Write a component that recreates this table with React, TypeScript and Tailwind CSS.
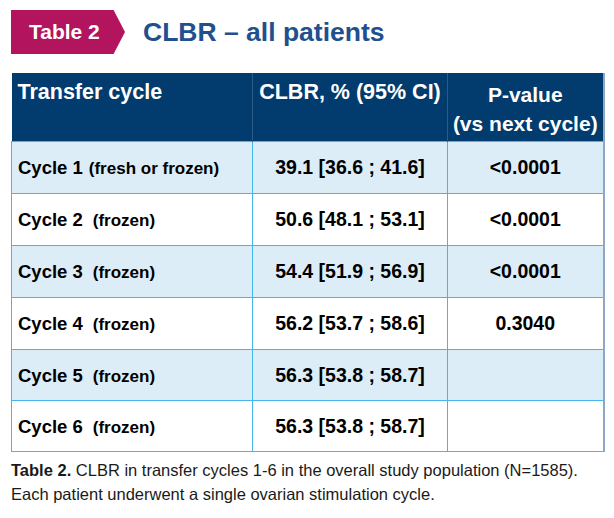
const rows = [
  { cycle: "Cycle 1", note: "(fresh or frozen)", gap: "ml-[6px]", clbr: "39.1 [36.6 ; 41.6]", p: "<0.0001" },
  { cycle: "Cycle 2", note: "(frozen)", gap: "ml-[10px]", clbr: "50.6 [48.1 ; 53.1]", p: "<0.0001" },
  { cycle: "Cycle 3", note: "(frozen)", gap: "ml-[10px]", clbr: "54.4 [51.9 ; 56.9]", p: "<0.0001" },
  { cycle: "Cycle 4", note: "(frozen)", gap: "ml-[10px]", clbr: "56.2 [53.7 ; 58.6]", p: "0.3040" },
  { cycle: "Cycle 5", note: "(frozen)", gap: "ml-[10px]", clbr: "56.3 [53.8 ; 58.7]", p: "" },
  { cycle: "Cycle 6", note: "(frozen)", gap: "ml-[10px]", clbr: "56.3 [53.8 ; 58.7]", p: "" },
];

export default function App() {
  return (
    <div className="h-[518px] w-[614px] overflow-hidden bg-white font-['Liberation_Sans',Arial,sans-serif]">
      <div className="flex items-center pl-[11px] pt-[10px]">
        <div className="flex h-[44px] w-[114px] items-center bg-[#b3145e] pl-[18px] text-[21px] font-bold text-white [clip-path:polygon(0_0,90%_0,100%_50%,90%_100%,0_100%)]">
          Table 2
        </div>
        <h1 className="ml-[18px] text-[26.5px] font-bold leading-none text-[#21508e]">
          CLBR – all patients
        </h1>
      </div>

      <table className="ml-[11px] mt-[19px] table-fixed border-collapse border-r-2 border-r-[#8ea7c6]">
        <colgroup>
          <col className="w-[241px]" />
          <col className="w-[195px]" />
          <col className="w-[156px]" />
        </colgroup>
        <thead>
          <tr className="h-[68px] bg-[#023b6d] text-[21.5px] font-bold leading-[29px] text-white">
            <th className="whitespace-nowrap border-r border-[#2a5a86] px-[6px] pt-[5px] text-left align-top font-bold">
              Transfer cycle
            </th>
            <th className="whitespace-nowrap border-r border-[#2a5a86] px-0 pt-[5px] text-center align-top font-bold">
              CLBR, % (95% CI)
            </th>
            <th className="whitespace-nowrap px-0 pt-[7px] text-center align-top text-[21px] font-bold">
              P-value
              <br />
              (vs next cycle)
            </th>
          </tr>
        </thead>
        <tbody>
          {rows.map((r, i) => (
            <tr
              key={r.cycle}
              className={
                (i % 2 === 0 ? "bg-[#dcedf8] " : "bg-white ") +
                (i < 4 ? "h-[52px]" : "h-[51px]")
              }
            >
              <td className="whitespace-nowrap border border-[#44b6ea] px-[6px] pt-[2px] align-middle font-bold text-black">
                <span className="text-[18.5px]">{r.cycle}</span>
                <span className={"text-[17px] " + r.gap}>{r.note}</span>
              </td>
              <td className="whitespace-nowrap border border-[#44b6ea] pt-[2px] text-center align-middle text-[19.5px] font-bold text-black">
                {r.clbr}
              </td>
              <td className="whitespace-nowrap border border-[#44b6ea] pt-[2px] text-center align-middle text-[19.5px] font-bold text-black">
                {r.p}
              </td>
            </tr>
          ))}
        </tbody>
      </table>

      <p className="ml-[11px] mt-[6px] whitespace-nowrap text-[16.5px] leading-[24px] text-[#1a1a1a]">
        <span className="font-bold">Table 2.</span> CLBR in transfer cycles 1-6 in the overall study
        population (N=1585).
        <br />
        Each patient underwent a single ovarian stimulation cycle.
      </p>
    </div>
  );
}
